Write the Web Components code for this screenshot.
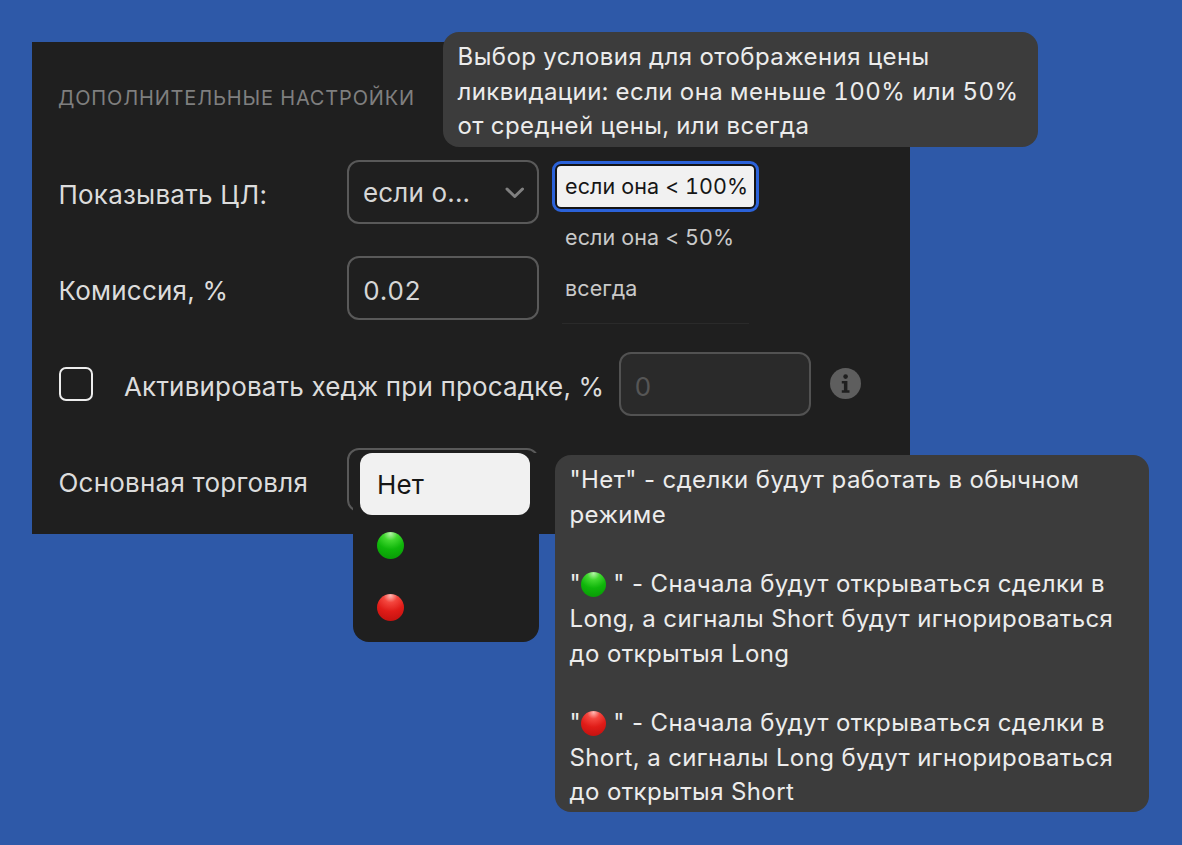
<!DOCTYPE html>
<html lang="ru">
<head>
<meta charset="utf-8">
<title>Дополнительные настройки</title>
<style>
  html, body { margin: 0; height: 100%; }
  body {
    background: #2e59a8;
    font-family: Inter, "Liberation Sans", sans-serif;
    color: #e4e4e4;
    overflow: hidden;
  }
</style>
</head>
<body>
<settings-stage>
  <settings-panel heading="Дополнительные настройки">
    <form-row label="Показывать ЦЛ:" style="--row-h:64px; --row-mt:0px">
      <select-box value="если о..."></select-box>
    </form-row>
    <form-row label="Комиссия, %" style="--row-h:64px; --row-mt:32px">
      <text-field value="0.02"></text-field>
    </form-row>
    <hedge-row></hedge-row>
    <form-row label="Основная торговля" style="--row-h:64px; --row-mt:32px">
      <select-box value=""></select-box>
    </form-row>
  </settings-panel>

  <native-list style="left:552px; top:161px"></native-list>
  <dot-list style="left:353px; top:453px"></dot-list>

  <tool-tip style="left:443px; top:32px; width:595px; height:115px; --lh:34.6px; --pt:8px; --feat:'tnum'; --ls:.43px">Выбор условия для отображения цены
ликвидации: если она меньше 100% или 50%
от средней цены, или всегда</tool-tip>

  <tool-tip style="left:555px; top:455px; width:594px; height:357px; --lh:34.7px; --pt:8px; --ls:.39px">"Нет" - сделки будут работать в обычном
режиме

"<status-dot color="green"></status-dot> " - Сначала будут открываться сделки в
Long, а сигналы Short будут игнорироваться
до открытыя Long

"<status-dot color="red"></status-dot> " - Сначала будут открываться сделки в
Short, а сигналы Long будут игнорироваться
до открытыя Short</tool-tip>
</settings-stage>

<script>
// small helper: every element gets an open shadow root from a string
function shadow(el, html) {
  el.attachShadow({ mode: 'open' }).innerHTML = html;
}

class SettingsStage extends HTMLElement {
  constructor() {
    super();
    shadow(this, `
      <style>
        :host { display: block; position: relative; width: 1182px; height: 845px; padding: 42px 0 0 32px; box-sizing: border-box; }
      </style>
      <slot></slot>`);
  }
}

class SettingsPanel extends HTMLElement {
  connectedCallback() {
    shadow(this, `
      <style>
        :host { display: block; width: 878px; height: 492px; box-sizing: border-box; background: #1f1f1f; padding: 0 0 0 27px; }
        h2 {
          margin: 0 0 0 -1px; height: 118px; padding-top: 44px; box-sizing: border-box;
          font: 400 20px/24px Inter, "Liberation Sans", sans-serif;
          letter-spacing: .83px; text-transform: uppercase; color: #7f7f7f;
        }
      </style>
      <h2>${this.getAttribute('heading')}</h2>
      <slot></slot>`);
  }
}

class FormRow extends HTMLElement {
  connectedCallback() {
    shadow(this, `
      <style>
        :host { display: flex; align-items: center; height: var(--row-h); margin-top: var(--row-mt); font-size: 26px; letter-spacing: .22px; color: #dcdcdc; }
        .label { width: 288px; flex: none; padding-top: 5px; margin-left: -.5px; margin-right: .5px; }
      </style>
      <span class="label">${this.getAttribute('label')}</span>
      <slot></slot>`);
  }
}

class SelectBox extends HTMLElement {
  connectedCallback() {
    shadow(this, `
      <style>
        :host { display: flex; align-items: center; justify-content: space-between; box-sizing: border-box; width: 192px; height: 64px; padding: 0 12px 0 14px; border: 2px solid #595959; border-radius: 12px; font-size: 26px; letter-spacing: .17px; color: #d6d6d6; }
        svg { display: block; }
      </style>
      <span>${this.getAttribute('value')}</span>
      <svg width="22" height="12" viewBox="0 0 22 12" fill="none"><path d="M4 3 L11.75 10.5 L19.5 3" stroke="#808080" stroke-width="3" stroke-linecap="round" stroke-linejoin="round"/></svg>`);
  }
}

class TextField extends HTMLElement {
  connectedCallback() {
    const off = this.hasAttribute('disabled');
    shadow(this, `
      <style>
        :host { display: flex; align-items: center; box-sizing: border-box; width: 192px; height: 64px; padding: 5px 14px 0; border: 2px solid ${off ? '#525252' : '#595959'}; border-radius: 12px; font-size: 26px; letter-spacing: .17px; font-feature-settings: "tnum"; color: ${off ? '#565656' : '#d6d6d6'}; background: ${off ? '#2a2a2a' : 'transparent'}; flex: none; }
      </style>
      <span>${this.getAttribute('value')}</span>`);
  }
}

class CheckBox extends HTMLElement {
  constructor() {
    super();
    shadow(this, `
      <style>
        :host { display: block; box-sizing: border-box; width: 34px; height: 34px; border: 2px solid #ececec; border-radius: 7px; flex: none; }
      </style>`);
  }
}

class InfoIcon extends HTMLElement {
  constructor() {
    super();
    shadow(this, `
      <style>
        :host { display: block; width: 31px; height: 31px; flex: none; }
        svg { display: block; }
      </style>
      <svg width="31" height="31" viewBox="0 0 31 31">
        <circle cx="15.5" cy="15.5" r="15.5" fill="#5e5e5e"/>
        <circle cx="15.6" cy="8.6" r="2.3" fill="#1f1f1f"/>
        <path d="M11.8 13h5.6v9.2h2.1v2.6h-7.7v-2.6h2.1v-6.6h-2.1z" fill="#1f1f1f"/>
      </svg>`);
  }
}

class HedgeRow extends HTMLElement {
  constructor() {
    super();
    shadow(this, `
      <style>
        :host { display: flex; align-items: center; height: 64px; margin-top: 32px; font-size: 26px; letter-spacing: .18px; color: #dcdcdc; }
        span { margin: 5px 0 0 31.5px; width: 494.5px; flex: none; white-space: nowrap; }
        info-icon { margin: -1px 0 0 19px; }
        check-box { margin-top: -1px; margin-left: -.5px; }
      </style>
      <check-box></check-box>
      <span>Активировать хедж при просадке, %</span>
      <text-field value="0" disabled></text-field>
      <info-icon></info-icon>`);
  }
}

class NativeList extends HTMLElement {
  constructor() {
    super();
    shadow(this, `
      <style>
        :host { position: absolute; display: flex; flex-direction: column; box-sizing: border-box; width: 207px; height: 163px; font-size: 21.5px; letter-spacing: .1px; font-feature-settings: "tnum"; color: #c9c9c9; background: #1f1f1f; }
        .on { box-sizing: border-box; line-height: 41px; padding-left: 8px; color: #161616; background: #f1f1f1; border: 2px solid #141414; border-radius: 6px; outline: 3px solid #2b62d9; outline-offset: 0; margin: 3px; height: 45px; white-space: nowrap; }
        .opt { padding-left: 13px; height: 51px; line-height: 50px; white-space: nowrap; }
        .rule { margin: 9px 10px 0; height: 1px; background: #2a2a2a; }
      </style>
      <div class="on">если она &lt; 100%</div>
      <div class="opt">если она &lt; 50%</div>
      <div class="opt">всегда</div>
      <div class="rule"></div>`);
  }
}

class DotList extends HTMLElement {
  constructor() {
    super();
    shadow(this, `
      <style>
        :host { position: absolute; display: block; box-sizing: border-box; width: 186px; height: 189px; padding: 0 9px 0 7px; background: #1f1f1f; border-radius: 0 0 16px 16px; font-size: 26px; letter-spacing: .17px; }
        .on { display: flex; align-items: center; height: 62px; padding-left: 17px; border-radius: 12px; background: #f1f1f1; color: #161616; }
        .opt { display: flex; align-items: center; height: 61px; padding-left: 16.5px; --dot: 27px; }
      </style>
      <div class="on">Нет</div>
      <div class="opt"><status-dot color="green"></status-dot></div>
      <div class="opt" style="height:62px"><status-dot color="red"></status-dot></div>`);
  }
}

class StatusDot extends HTMLElement {
  connectedCallback() {
    const green = this.getAttribute('color') === 'green';
    const bg = green
      ? 'radial-gradient(circle at 50% 6%, #b4f3a6 0, #42d830 24%, #0fb60a 55%, #079405 100%)'
      : 'radial-gradient(circle at 50% 6%, #ffb8b2 0, #f4463e 24%, #e01c18 55%, #bc0f0d 100%)';
    shadow(this, `<style>:host { display: inline-block; width: var(--dot, 25px); height: var(--dot, 25px); border-radius: 50%; background: ${bg}; vertical-align: -5px; white-space: normal; }</style>`);
  }
}

class ToolTip extends HTMLElement {
  constructor() {
    super();
    // no whitespace around the slot: the host keeps white-space: pre-wrap
    shadow(this, `<style>:host { position: absolute; display: block; box-sizing: border-box; padding: var(--pt) 15px 0 14.5px; background: #3c3c3c; border-radius: 16px; font-size: 24px; line-height: var(--lh); letter-spacing: var(--ls); font-feature-settings: var(--feat, normal); color: #ececec; white-space: pre-wrap; }</style><slot></slot>`);
  }
}

customElements.define('settings-stage', SettingsStage);
customElements.define('settings-panel', SettingsPanel);
customElements.define('form-row', FormRow);
customElements.define('select-box', SelectBox);
customElements.define('text-field', TextField);
customElements.define('check-box', CheckBox);
customElements.define('info-icon', InfoIcon);
customElements.define('hedge-row', HedgeRow);
customElements.define('native-list', NativeList);
customElements.define('dot-list', DotList);
customElements.define('status-dot', StatusDot);
customElements.define('tool-tip', ToolTip);
</script>
</body>
</html>
